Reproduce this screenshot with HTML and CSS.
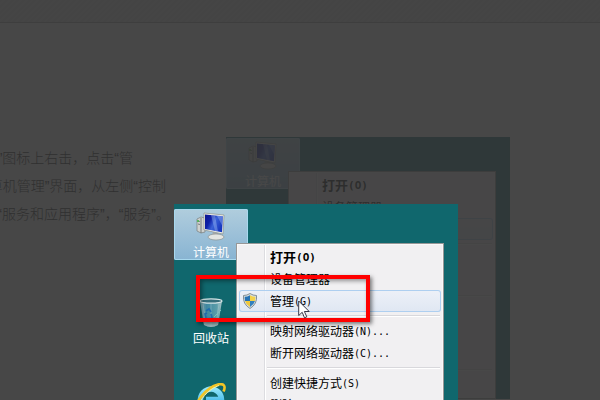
FILE: index.html
```
<!DOCTYPE html>
<html lang="zh-CN">
<head>
<meta charset="utf-8">
<title>计算机管理</title>
<link rel="stylesheet" href="styles.css">
</head>
<body>
<svg class="defs" aria-hidden="true">
  <defs>
    <linearGradient id="screen" x1="0" y1="0" x2="1" y2=".5"><stop offset="0" stop-color="#0a1590"/><stop offset=".35" stop-color="#0f20a8"/><stop offset=".6" stop-color="#3a62d8"/><stop offset="1" stop-color="#1838c0"/></linearGradient>
    <linearGradient id="glass" x1="0" y1="0" x2="1" y2="0"><stop offset="0" stop-color="#8fb4bc"/><stop offset=".3" stop-color="#3d87a0"/><stop offset=".75" stop-color="#5a9ca8"/><stop offset="1" stop-color="#a9c4c8"/></linearGradient>
    <linearGradient id="ie" x1="0" y1="0" x2="0" y2="1"><stop offset="0" stop-color="#8fe4fa"/><stop offset="1" stop-color="#1ba0e0"/></linearGradient>
    <symbol id="computer" viewBox="0 0 32 32">
      <path d="M2 8l4-2 4 1v14l-4 1-4-2z" fill="#cfd2cf" stroke="#777c7c" stroke-width=".7"/>
      <path d="M6 7v15M3 10l2 .5M3 13l2 .5" stroke="#6c7474" stroke-width=".9"/>
      <path d="M3 9v2" stroke="#35b63c" stroke-width="1.4"/>
      <path d="M18 21l5 1 1 4-7-1z" fill="#a9adad"/>
      <ellipse cx="21" cy="26" rx="8" ry="3" fill="#e4e6e2" stroke="#8c9290" stroke-width=".7"/>
      <path d="M9 2l20 2-1 19-19-4z" fill="#f1f1ea" stroke="#8b908c" stroke-width=".7"/>
      <path d="M10 3.500l18 1.800-1 16L10 18z" fill="url(#screen)"/>
      <path d="M28 5.300l-1 9-5-9.600zM16 4l4 .5 3 16-3-.6z" fill="#b5cdfa" opacity=".35"/>
    </symbol>
    <symbol id="bin" viewBox="0 0 32 32">
      <path d="M5 4l4 24q7 4 14 0l4-24z" fill="url(#glass)"/>
      <path d="M8 23l1 5q7 4 14 0l1-5q-8 3-16 0z" fill="#bac9ca" opacity=".75"/>
      <path d="M8 7l3 20M24 7l-3 20M16 7v22" stroke="#bcdadd" stroke-width="1" opacity=".35"/>
      <path d="M11 14l3-2 2 3M16 17l1 4-4 1M11 21l-1-4 2-1" fill="none" stroke="#1764ae" stroke-width="1.800" opacity=".8"/>
      <path d="M26 13l-7 7" stroke="#7cc0b8"/>
      <ellipse cx="16" cy="4" rx="11" ry="2.200" fill="#356d7a" stroke="#d5e4e5" stroke-width="1.200"/>
    </symbol>
    <symbol id="browser" viewBox="0 0 32 32">
      <path d="M25 22a10.500 10.500 0 1 1 1.500-5.500H11" fill="none" stroke="url(#ie)" stroke-width="5.500"/>
      <path d="M3 28C-3 21 12 4 23 1.500c6-1.400 8 1.500 5.500 7" fill="none" stroke="#f3c526" stroke-width="2.600"/>
      <path d="M4 22C7 13 16 5 24 2.500" fill="none" stroke="#fff099" stroke-width="1"/>
    </symbol>
    <symbol id="shield" viewBox="0 0 16 16">
      <path d="M8 .5q3 2 6.500 2Q15.500 11 8 15.500.5 11 1.500 2.500 5 2.500 8 .5z" fill="#d9dfdf" stroke="#6c7a80" stroke-width=".8"/>
      <path d="M8 2.200V8H3q-.4-2-.3-4.300Q5.500 3.700 8 2.200z" fill="#2673b5"/>
      <path d="M8 2.200q2.500 1.500 5.300 1.500Q13.400 6 13 8H8z" fill="#f4d34b"/>
      <path d="M3 8h5v5.900Q4 11.500 3 8z" fill="#f0c83b"/>
      <path d="M8 8h5q-1 3.500-5 5.900z" fill="#3180bd"/>
    </symbol>
  </defs>
</svg>

<div class="page">
  <header class="topbar"></header>
  <main class="article">
    <div class="copy">
      <p class="line line-short">”图标上右击，点击“管</p>
      <p class="line line-full">算机管理”界面，从左侧“控制</p>
      <p class="line">“服务和应用程序”，“服务”。</p>
    </div>
    <figure class="thumb">
      <div class="desktop dimmed" inert>
        <div class="shortcuts">
          <div class="tile selected"><svg class="tile-icon"><use href="#computer"/></svg><span>计算机</span></div>
        </div>
        <div class="menu">
          <button class="item strong">打开<span class="key">(O)</span></button>
          <button class="item">设备管理器</button>
          <button class="item active"></button>
          <hr class="rule">
          <button class="item"></button>
          <button class="item"></button>
          <hr class="rule">
          <button class="item"></button>
          <button class="item"></button>
          <button class="item"></button>
          <hr class="rule">
          <button class="item"></button>
        </div>
      </div>
    </figure>
  </main>

  <div class="lightbox">
    <div class="desktop">
      <div class="shortcuts">
        <div class="tile selected"><svg class="tile-icon"><use href="#computer"/></svg><span>计算机</span></div>
        <div class="tile"><svg class="tile-icon"><use href="#bin"/></svg><span>回收站</span></div>
        <div class="tile"><svg class="tile-icon"><use href="#browser"/></svg></div>
      </div>
      <div class="menu">
        <button class="item strong">打开<span class="key">(O)</span></button>
        <button class="item">设备管理器</button>
        <button class="item active"><svg class="shield"><use href="#shield"/></svg>管理<span class="key">(G)</span></button>
        <hr class="rule">
        <button class="item">映射网络驱动器<span class="key">(N)...</span></button>
        <button class="item">断开网络驱动器<span class="key">(C)...</span></button>
        <hr class="rule">
        <button class="item">创建快捷方式<span class="key">(S)</span></button>
        <button class="item">删除<span class="key">(D)</span></button>
      </div>
      <div class="marker"></div>
      <svg class="cursor" viewBox="0 0 12 19"><path d="M.7 1v14.500l3.500-3.200 2.300 5.500 2.300-1-2.400-5.300h4.800z" fill="#fff" stroke="#223" stroke-width=".9"/></svg>
    </div>
  </div>
</div>
</body>
</html>
```
FILE: styles.css
```
* { box-sizing: border-box; }

body {
  margin: 0;
  background: #474747;
  font-family: "Liberation Sans", "Noto Sans CJK SC", sans-serif;
}

.defs { position: absolute; width: 0; height: 0; }

.page {
  position: relative;
  height: 100vh;
  overflow: hidden;
}

.topbar {
  height: 23px;
  background: repeating-linear-gradient(135deg, #444 0 2px, #454545 2px 4px);
  border-bottom: 1px solid #3e3e3e;
}

.article {
  display: grid;
  grid-template-columns: 170px 284px;
  column-gap: 56px;
  padding-top: 114px;
}

.copy { padding-top: 7px; }

.line {
  display: flex;
  justify-content: flex-end;
  margin: 0;
  color: #303030;
  font-size: 14px;
  font-weight: 300;
  line-height: 28px;
  white-space: nowrap;
}

.line-short { padding-right: 37px; }
.line-full { padding-right: 4px; }

.thumb { margin: 0; background: #333; }

.desktop {
  position: relative;
  height: 100%;
  padding-top: 5px;
  background: #10676d;
}

.dimmed {
  height: 262px;
  padding-top: 1px;
  opacity: 0.1;
}

.shortcuts {
  display: flex;
  flex-direction: column;
  gap: 35px;
  width: 74px;
}

.tile {
  display: flex;
  flex-direction: column;
  align-items: center;
  gap: 2px;
  height: 51px;
  padding-top: 2px;
  color: #fff;
  font-size: 12px;
  line-height: 16px;
}

.selected {
  background: linear-gradient(#b0cddd, #9cc0d8 50%, #88b4d2);
  border-radius: 2px;
  box-shadow: inset 0 0 0 1px #a8d8ee;
}

.tile-icon { flex: none; width: 32px; height: 32px; }

.menu {
  position: absolute;
  top: 39px;
  left: 62px;
  right: 14px;
  padding: 2px;
  border: 1px solid #979797;
  background: linear-gradient(90deg, #f1f0f2 27px, #dcdce0 27px 28px, #fff 28px 29px, #f1f0f2 29px);
  box-shadow: inset 0 0 0 1px #f8f8f8;
}

.dimmed .menu { top: 34px; }

.item {
  position: relative;
  display: flex;
  align-items: center;
  width: 100%;
  height: 22px;
  padding: 2px 0 0 31px;
  border: 0;
  background: none;
  color: #000;
  font-family: "Liberation Sans", "Noto Sans CJK SC", sans-serif;
  font-size: 12px;
  line-height: 20px;
  text-align: left;
  white-space: nowrap;
}

.key { font-family: "DejaVu Sans Mono", monospace; font-size: 10px; }

.strong { font-size: 13px; font-weight: bold; }
.strong .key { font-size: 11px; }

.active {
  border-radius: 3px;
  background: linear-gradient(rgba(236, 241, 249, 0.8), rgba(216, 227, 243, 0.7));
  box-shadow: inset 0 0 0 1px #aecff0;
}

.shield {
  position: absolute;
  top: 3px;
  left: 3px;
  width: 16px;
  height: 16px;
}

.rule {
  height: 2px;
  margin: 3px 1px 3px 28px;
  border: 0;
  border-top: 1px solid #d8d8dc;
  background: #fff;
}

.lightbox {
  position: absolute;
  top: 204px;
  bottom: 0;
  left: 174px;
  width: 284px;
  overflow: hidden;
}

.marker {
  position: absolute;
  top: 71px;
  left: 22px;
  width: 174px;
  height: 47px;
  border: 4px solid #f00;
  box-shadow: 2px 2px 4px rgba(0, 0, 0, 0.5), inset 2px 2px 4px rgba(0, 0, 0, 0.4);
}

.cursor {
  position: absolute;
  top: 96px;
  left: 124px;
  width: 12px;
  height: 19px;
}
```
